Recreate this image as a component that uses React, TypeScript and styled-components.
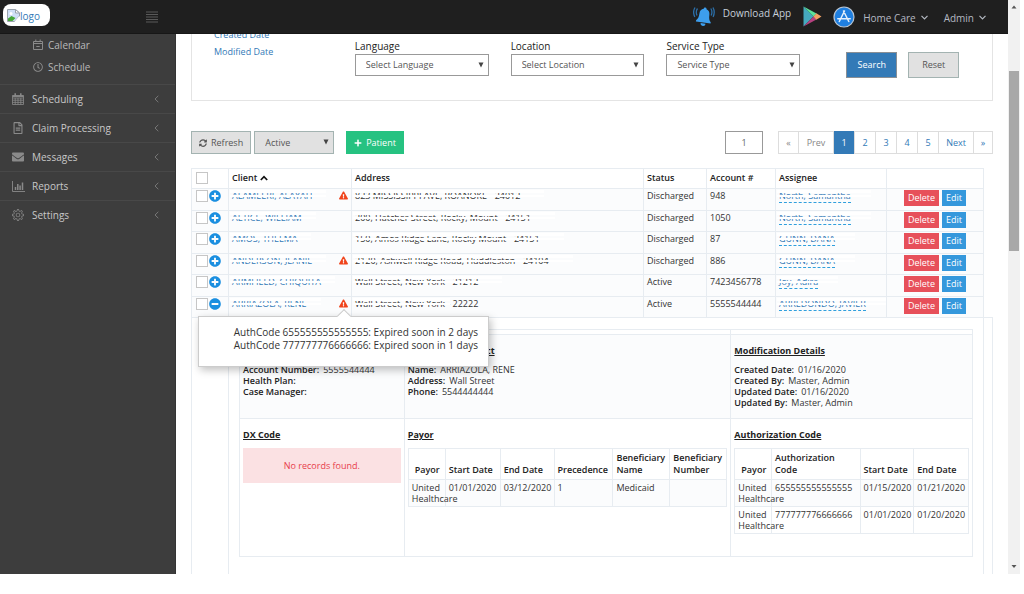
import React from "react";
import styled, { createGlobalStyle, css } from "styled-components";
import {
  FaEnvelope,
  FaExclamationTriangle,
  FaMinusCircle,
  FaPlus,
  FaPlusCircle,
  FaRegClock,
  FaRegFileAlt,
  FaSyncAlt,
} from "react-icons/fa";
import { SlSettings } from "react-icons/sl";

const line = "#e7ecf1";
const link = "#337ab7";

const GlobalStyle = createGlobalStyle`
  *, *::before, *::after { box-sizing: border-box; }
  html, body { margin: 0; background: #fff; }
  body {
    font-family: "Open Sans", "Liberation Sans", sans-serif;
    font-size: 9px;
    line-height: 12px;
    color: #333;
    overflow: hidden;
  }
  a { color: ${link}; text-decoration: none; }
  button, input, select { font: inherit; margin: 0; }
  svg { display: block; flex: none; }
`;

const Page = styled.div`
  display: flex;
  height: calc(100vh - 20px);
  padding-right: 4px;
  overflow: hidden;
`;

const Shell = styled.div`
  flex: 1;
  min-width: 0;
  display: flex;
  flex-direction: column;
`;

/* ---------- top bar ---------- */

const TopBar = styled.header`
  flex: none;
  display: flex;
  align-items: center;
  height: 34px;
  padding: 0 22px 0 3px;
  background: #1f1f1f;
  border-bottom: 1px solid #171717;
  color: #c6cfda;
  font-size: 10px;
`;

const Logo = styled.a`
  display: flex;
  align-items: center;
  width: 47px;
  height: 22px;
  margin-bottom: 4px;
  padding: 2px 0 0 4px;
  border-radius: 8px;
  background: #fff;
  font-size: 10px;
`;

const MenuToggle = styled.button`
  margin-left: 96px;
  padding: 0;
  border: 0;
  background: none;
  color: #5a5a5a;
`;

const TopActions = styled.div`
  display: flex;
  align-items: center;
  margin-left: auto;
`;

const DownloadLabel = styled.span`
  margin: 0 12px 8px 8px;
`;

const StoreLink = styled.a`
  margin-right: 11px;
  & + & { margin-right: 8px; }
`;

const TopMenu = styled.button`
  display: flex;
  align-items: center;
  gap: 5px;
  margin-right: ${(p: { $last?: boolean }) => (p.$last ? 0 : 16)}px;
  padding: 2px 0 0;
  border: 0;
  background: none;
  color: #b4b9c2;
`;

/* ---------- side bar ---------- */

const Body = styled.div`
  flex: 1;
  min-height: 0;
  display: flex;
`;

const SideBar = styled.nav`
  flex: none;
  width: 176px;
  background: #3d3d3d;
  border-right: 1px solid #343434;
`;

const SubLink = styled.a`
  display: flex;
  align-items: center;
  gap: 5px;
  height: 23px;
  padding-left: 33px;
  color: #b9b9b9;
  font-size: 10px;
  svg { color: #8a8a8a; }
`;

const SubMenu = styled.div`
  height: 50px;
  overflow: hidden;
  ${SubLink}:first-child { height: 21px; }
`;

const NavLink = styled.a`
  display: grid;
  grid-template-columns: 20px 1fr 6px;
  align-items: center;
  height: 29px;
  padding: 0 15px 0 12px;
  border-top: 1px solid #484848;
  color: #c8c8c8;
  font-size: 10px;
  svg { color: #8a8a8a; }
`;

/* ---------- main ---------- */

const Main = styled.main`
  flex: 1;
  min-width: 0;
  padding: 0 15px;
  overflow: hidden;
`;

const FilterPanel = styled.form`
  display: grid;
  grid-template-columns: 119fr 134fr 134fr 134fr 159fr;
  column-gap: 22px;
  height: 67px;
  padding: 0 11px 0 22px;
  border: 1px solid #e4e4e4;
  border-top: 0;
`;

const SortLinks = styled.div`
  display: flex;
  flex-direction: column;
  margin-top: -8px;
  line-height: 17px;
`;

const Field = styled.div`
  padding-top: 5px;
  label {
    display: block;
    height: 15px;
    line-height: 14px;
    font-size: 10px;
    color: #222;
  }
`;

const SelectBox = styled.div<{ $grey?: boolean }>`
  position: relative;
  select {
    appearance: none;
    display: block;
    width: 100%;
    height: ${(p) => (p.$grey ? 23 : 22)}px;
    padding: 0 10px;
    border: 1px solid ${(p) => (p.$grey ? "#a3b3b1" : "#999")};
    border-radius: 0;
    background: ${(p) => (p.$grey ? "#e1e1e1" : "#fff")};
    color: #555;
  }
  svg {
    position: absolute;
    right: 5px;
    top: 8px;
    pointer-events: none;
  }
`;

const FilterButtons = styled.div`
  display: flex;
  gap: 11px;
  padding: 18px 0 0 24px;
`;

const Button = styled.button<{ $tone: "blue" | "grey" | "green" }>`
  display: flex;
  align-items: center;
  justify-content: center;
  gap: 4px;
  height: 23px;
  padding: 0 7px;
  border: 1px solid #a3b3b1;
  background: #e1e1e1;
  color: #555;
  ${(p) => p.$tone === "blue" && css`background: #337ab7; border-color: #8a8f94; color: #fff;`}
  ${(p) => p.$tone === "green" && css`background: #26c281; border-color: #26c281; color: #fff;`}
  ${FilterButtons} & { width: 51px; height: 26px; }
`;

const Toolbar = styled.div`
  display: flex;
  align-items: center;
  margin: 30px 0 14px;
  ${SelectBox} { width: 80px; margin: 0 12px 0 3px; }
`;

const PageInput = styled.input`
  width: 38px;
  height: 23px;
  margin: 0 15px 0 auto;
  border: 1px solid #999;
  text-align: center;
  color: #666;
`;

const Pager = styled.nav`
  display: flex;
  border: 1px solid #ddd;
`;

const PagerLink = styled.a<{ $active?: boolean; $muted?: boolean; $wide?: boolean }>`
  width: ${(p) => (p.$wide ? 35 : 21)}px;
  line-height: 21px;
  text-align: center;
  color: ${(p) => (p.$muted ? "#888" : link)};
  &:first-child, &:last-child { width: 19px; }
  & + & { border-left: 1px solid #ddd; }
  ${(p) => p.$active && css`
    && { margin: -1px 0; padding: 1px 0; border-left-color: ${link}; }
    background: ${link};
    color: #fff;
  `}
`;

/* ---------- client table ---------- */

const ClientTable = styled.table`
  width: calc(100% - 9px);
  table-layout: fixed;
  border-collapse: collapse;
  th, td { border: 1px solid ${line}; }
  > thead th {
    height: 20px;
    padding: 0 3px 1px;
    text-align: left;
    font-weight: 600;
    color: #222;
  }
`;

const SortHead = styled.span`
  display: flex;
  align-items: center;
  gap: 3px;
`;

const ClientRow = styled.tr`
  height: 22px;
  background: #fbfcfd;
  &:nth-child(even) { height: 21px; }
  > td { padding: 1px 3px 0; vertical-align: top; }
`;

const SelectCell = styled.div`
  display: flex;
  align-items: center;
  gap: 1px;
  margin-left: 1px;
`;

const Tick = styled.input.attrs({ type: "checkbox" })`
  appearance: none;
  width: 12px;
  height: 12px;
  border: 1px solid #c6c6c6;
  background: #fff;
`;

const IconButton = styled.button`
  padding: 0;
  border: 0;
  background: none;
  color: #1b8fe0;
`;

const ClientCell = styled.div`
  display: flex;
  justify-content: space-between;
`;

const Warning = styled.span`
  position: relative;
  padding-top: 1px;
  color: #f0441c;
`;

/* names and addresses are masked by white strips */
const Masked = styled.span<{ $pad?: number }>`
  position: relative;
  display: inline-block;
  height: 12px;
  white-space: nowrap;
  &::after {
    content: "";
    position: absolute;
    inset: 0 ${(p) => -(p.$pad ?? 0)}px 1px -2px;
    background: linear-gradient(
      #fff 0 3px, transparent 3px 5px, #fff 5px 7px, transparent 7px
    );
  }
`;

const AssigneeLink = styled.a`
  display: inline-block;
  border-bottom: 1px dashed #2f9fdd;
`;

const RowActions = styled.div`
  display: flex;
  justify-content: center;
  gap: 3px;
`;

const SmallButton = styled.button<{ $danger?: boolean }>`
  height: 16px;
  padding: 0 4px;
  border: 0;
  line-height: 16px;
  background: ${(p) => (p.$danger ? "#e7505a" : "#3598dc")};
  color: #fff;
`;

/* ---------- alert bubble ---------- */

const Popover = styled.div`
  position: absolute;
  z-index: 5;
  top: 18px;
  left: -141px;
  width: 291px;
  height: 51px;
  padding: 9px 10px;
  border: 1px solid #ccc;
  background: #fff;
  box-shadow: 2px 3px 8px rgba(0, 0, 0, 0.25);
  color: #333;
  font-size: 10px;
  line-height: 13px;
  text-align: right;
  white-space: nowrap;
  &::before {
    content: "";
    position: absolute;
    left: 140px;
    top: -6px;
    width: 10px;
    height: 10px;
    border: 1px solid #ccc;
    border-right: 0;
    border-bottom: 0;
    background: #fff;
    transform: rotate(45deg);
  }
`;

/* ---------- expanded client ---------- */

const ExpandedCell = styled.td`
  padding: 0;
`;

const Expanded = styled.div`
  min-height: 300px;
  margin-right: -10px;
  padding: 11px 19px 0 10px;
  border-right: 1px solid ${line};
  border-top: 1px solid ${line};
  margin-top: -1px;
`;

const DetailGrid = styled.div`
  display: grid;
  grid-template-columns: 165fr 327fr 242fr;
  grid-template-rows: 5px 84px 138px;
  border: solid ${line};
  border-width: 1px 1px 0 0;
`;

const Detail = styled.section<{ $tint?: boolean }>`
  min-width: 0;
  padding: 10px 3px 0;
  border: solid ${line};
  border-width: 0 0 1px 1px;
  background: ${(p) => (p.$tint ? "#fbfcfd" : "#fff")};
  h3 {
    margin: 0 0 7px;
    font-size: 9px;
    font-weight: 700;
    text-decoration: underline;
    color: #222;
  }
`;

const Spacer = styled.div`
  border: solid ${line};
  border-width: 0 0 1px 1px;
`;

const Facts = styled.dl`
  margin: 0;
  line-height: 11px;
  div { display: flex; gap: 4px; }
  dt { font-weight: 600; color: #222; }
  dd { margin: 0; }
`;

const EmptyNote = styled.p`
  margin: 0;
  line-height: 35px;
  background: #fbe1e3;
  color: #e73d4a;
  text-align: center;
`;

const RecordTable = styled.table`
  width: 100%;
  table-layout: fixed;
  border-collapse: collapse;
  th {
    height: 31px;
    padding: 0 3px 3px;
    vertical-align: bottom;
    text-align: left;
    font-weight: 600;
    color: #222;
  }
  th:first-child { padding-left: 6px; }
  td {
    height: 27px;
    padding: 2px 3px 0;
    vertical-align: top;
    line-height: 11px;
  }
  tbody tr:nth-child(odd) { background: #fbfcfd; }
`;

/* ---------- page scroll bar ---------- */

const ScrollTrack = styled.div`
  flex: none;
  display: flex;
  flex-direction: column;
  align-items: center;
  width: 12px;
  padding: 5px 0;
  background: #f1f1f1;
`;

const ScrollThumb = styled.div`
  width: 10px;
  height: 32%;
  margin: 62px 0 auto;
  background: #a8a8a8;
`;

/* ---------- drawings ---------- */

const Caret = () => (
  <svg width="6" height="6" viewBox="0 0 6 6"><path d="M.5.500h5L3 5.500z" fill="#444" /></svg>
);

const Chevron = () => (
  <svg width="7" height="5" viewBox="0 0 7 5"><path d="M.5.8l3 3 3-3" fill="none" stroke="currentColor" strokeWidth="1.2" /></svg>
);

const ChevronLeft = () => (
  <svg width="5" height="8" viewBox="0 0 5 8"><path d="M4.3.8L1 4l3.300 3.200" fill="none" stroke="#777" /></svg>
);

const ScrollArrow = ({ down }: { down?: boolean }) => (
  <svg width="6" height="4" viewBox="0 0 6 4"><path d={down ? "M.5 0h5L3 3z" : "M.5 3.500h5L3 .5z"} fill="#555" /></svg>
);

const BrokenImage = () => (
  <svg width="13" height="13" viewBox="0 0 13 13">
    <path d="M.5.500h8l4 3.500v3l-5 5.500h-7z" fill="#cfdff5" stroke="#9aa3ad" />
    <path d="M8.500.500v3.500h4z" fill="#fff" stroke="#9aa3ad" />
    <circle cx="4" cy="4.500" r="1.500" fill="#fff" />
    <path d="M1 12V9.500l3.500-2.500 4 2-3 3z" fill="#46a837" />
    <path d="M7.500 12.500l5-5.500v5.500z" fill="#fff" />
  </svg>
);

const Bars = () => (
  <svg width="12" height="12" viewBox="0 0 12 12">
    <path d="M0 1h12M0 3.500h12M0 6h12M0 8.500h12M0 11h12" stroke="currentColor" />
  </svg>
);

const Bell = () => (
  <svg width="22" height="22" viewBox="0 0 22 22">
    <g transform="rotate(8 11 11)" fill="#3d9eed">
      <path d="M11 1.500c.9 0 1.400.6 1.400 1.400 2.500.7 3.600 2.600 3.600 5.100 0 4 .7 5.700 2.400 7.300v1.200H3.600v-1.200C5.300 13.700 6 12 6 8c0-2.500 1.100-4.400 3.600-5.100 0-.8.5-1.400 1.400-1.400z" />
      <path d="M8.500 17.500h5a2.500 2.500 0 0 1-5 0z" />
    </g>
    <path d="M4.500 2.500C3 4.500 3 7 4 9.500M2 1.500C.2 4.500.300 8 1.800 11M17.800 2.500c1.400 2 1.400 4.500.4 7M20 1.500c1.600 3 1.500 6.500.1 9.500" fill="none" stroke="#2c6fa8" strokeWidth="1.300" />
  </svg>
);

const PlayStore = () => (
  <svg width="19" height="21" viewBox="0 0 19 21">
    <path d="M.5.500v20L10.500 10.500z" fill="#45a9be" />
    <path d="M.5.500l13 7-3 3z" fill="#5be29a" />
    <path d="M.5 20.500l13-7-3-3z" fill="#b5417f" />
    <path d="M13.300 7.300L18.500 10.500l-5.200 3.200-2.900-3.200z" fill="#f2a063" />
  </svg>
);

const AppStore = () => (
  <svg width="22" height="22" viewBox="0 0 22 22">
    <circle cx="11" cy="11" r="10" fill="#1f7fe0" stroke="#b9c6d4" strokeWidth="1.200" />
    <path d="M11.500 5L6.300 15.500M10.500 5l5.300 10.500M4.800 12.800h12.400" fill="none" stroke="#e4f0fb" strokeWidth="1.500" strokeLinecap="round" />
  </svg>
);

const CalendarGrid = () => (
  <svg width="12" height="12" viewBox="0 0 12 12" fill="none" stroke="currentColor">
    <path d="M.5 2.500h11v9H.5zM.5 5h11M.5 7.200h11M.5 9.400h11M3.200 5v6.500M6 5v6.500M8.800 5v6.500" strokeWidth=".8" />
    <path d="M.5 3.200h11" strokeWidth="1.500" />
    <path d="M3.200.3v2.500M8.800.3v2.500" strokeWidth="1.500" />
  </svg>
);

const CalendarSmall = () => (
  <svg width="10" height="11" viewBox="0 0 10 11" fill="none" stroke="currentColor">
    <path d="M.5 2.500h9v8h-9zM.5 4.500h9M2.800.5v2.500M7.200.5v2.500M3.300 7.500h3.400" />
  </svg>
);

const Chart = () => (
  <svg width="13" height="11" viewBox="0 0 13 11" fill="none" stroke="currentColor">
    <path d="M.5 0v10.500H13" strokeWidth=".9" />
    <path d="M3.500 9V6M5.800 9V3M8.100 9V4.500M10.500 9V1.500" strokeWidth="1.500" />
  </svg>
);

const SortUp = () => (
  <svg width="8" height="6" viewBox="0 0 8 6"><path d="M.8 5L4 1.700 7.200 5" fill="none" stroke="#111" strokeWidth="1.700" /></svg>
);

/* ---------- data ---------- */

const navItems = [
  { label: "Scheduling", icon: <CalendarGrid /> },
  { label: "Claim Processing", icon: <FaRegFileAlt size={12} /> },
  { label: "Messages", icon: <FaEnvelope size={12} /> },
  { label: "Reports", icon: <Chart /> },
  { label: "Settings", icon: <SlSettings size={12} /> },
];

const filters = [
  { id: "language", label: "Language", value: "Select Language" },
  { id: "location", label: "Location", value: "Select Location" },
  { id: "service", label: "Service Type", value: "Service Type" },
];

const clients = [
  { name: "ALAMEERI, ALAYAH", warn: true, address: "823 MISSISSIPPI AVE, ROANOKE - 24012", clear: "", status: "Discharged", account: "948", assignee: "North, Samantha" },
  { name: "ALTICE, WILLIAM", address: "200, Hatcher Street, Rocky, Mount - 24151", clear: "", status: "Discharged", account: "1050", assignee: "North, Samantha" },
  { name: "AMOS, THELMA", address: "150, Amos Ridge Lane, Rocky Mount - 24151", clear: "", status: "Discharged", account: "87", assignee: "GUNN, DANA" },
  { name: "ANDERSON, JEANIE", warn: true, address: "2120, Ashwell Ridge Road, Huddleston - 24104", clear: "", status: "Discharged", account: "886", assignee: "GUNN, DANA" },
  { name: "ARMFIELD, CHIQUITA", address: "Wall Street, New York - 21212", clear: "", status: "Active", account: "7423456778", assignee: "Joy, Adira" },
  { name: "ARRIAZOLA, RENE", warn: true, open: true, address: "Wall Street, New York -", clear: "22222", status: "Active", account: "5555544444", assignee: "ARREDONDO, JAVIER" },
];

const columnWidths = [37, 123, 292, 63, 69, 111, 97];

const Columns = ({ widths }: { widths: number[] }) => {
  const total = widths.reduce((a, b) => a + b, 0);
  return (
    <colgroup>
      {widths.map((w, i) => <col key={i} style={{ width: `${(w / total) * 100}%` }} />)}
    </colgroup>
  );
};

const FactList = ({ items }: { items: [string, string][] }) => (
  <Facts>
    {items.map(([k, v]) => (
      <div key={k}><dt>{k}:</dt><dd>{v}</dd></div>
    ))}
  </Facts>
);

const Records = ({ widths, heads, rows }: { widths: number[]; heads: string[]; rows: string[][] }) => (
  <RecordTable>
    <Columns widths={widths} />
    <thead><tr>{heads.map((h) => <th key={h}>{h}</th>)}</tr></thead>
    <tbody>
      {rows.map((r, i) => <tr key={i}>{r.map((c, j) => <td key={j}>{c}</td>)}</tr>)}
    </tbody>
  </RecordTable>
);

export default function App() {
  return (
    <>
      <GlobalStyle />
      <Page>
        <Shell>
          <TopBar>
            <Logo href="#"><BrokenImage />logo</Logo>
            <MenuToggle aria-label="Toggle menu"><Bars /></MenuToggle>
            <TopActions>
              <Bell />
              <DownloadLabel>Download App</DownloadLabel>
              <StoreLink href="#" aria-label="Google Play"><PlayStore /></StoreLink>
              <StoreLink href="#" aria-label="App Store"><AppStore /></StoreLink>
              <TopMenu>Home Care <Chevron /></TopMenu>
              <TopMenu $last>Admin <Chevron /></TopMenu>
            </TopActions>
          </TopBar>
          <Body>
            <SideBar>
              <SubMenu>
                <SubLink href="#"><CalendarSmall />Calendar</SubLink>
                <SubLink href="#"><FaRegClock size={10} />Schedule</SubLink>
              </SubMenu>
              {navItems.map((n) => (
                <NavLink href="#" key={n.label}>{n.icon}<span>{n.label}</span><ChevronLeft /></NavLink>
              ))}
            </SideBar>
            <Main>
              <FilterPanel>
                <SortLinks>
                  <a href="#">Created Date</a>
                  <a href="#">Modified Date</a>
                </SortLinks>
                {filters.map((f) => (
                  <Field key={f.id}>
                    <label htmlFor={f.id}>{f.label}</label>
                    <SelectBox>
                      <select id={f.id}><option>{f.value}</option></select>
                      <Caret />
                    </SelectBox>
                  </Field>
                ))}
                <FilterButtons>
                  <Button type="button" $tone="blue">Search</Button>
                  <Button type="button" $tone="grey">Reset</Button>
                </FilterButtons>
              </FilterPanel>

              <Toolbar>
                <Button $tone="grey"><FaSyncAlt size={8} />Refresh</Button>
                <SelectBox $grey>
                  <select aria-label="Status filter"><option>Active</option></select>
                  <Caret />
                </SelectBox>
                <Button $tone="green"><FaPlus size={8} />Patient</Button>
                <PageInput aria-label="Page" defaultValue="1" />
                <Pager aria-label="Pages">
                  <PagerLink href="#" $muted>«</PagerLink>
                  <PagerLink href="#" $muted $wide>Prev</PagerLink>
                  <PagerLink href="#" $active>1</PagerLink>
                  {["2", "3", "4", "5"].map((p) => <PagerLink href="#" key={p}>{p}</PagerLink>)}
                  <PagerLink href="#" $wide>Next</PagerLink>
                  <PagerLink href="#">»</PagerLink>
                </Pager>
              </Toolbar>

              <ClientTable>
                <Columns widths={columnWidths} />
                <thead>
                  <tr>
                    <th><SelectCell><Tick aria-label="Select all" /></SelectCell></th>
                    <th><SortHead>Client <SortUp /></SortHead></th>
                    <th>Address</th>
                    <th>Status</th>
                    <th>Account #</th>
                    <th>Assignee</th>
                    <th aria-label="Actions" />
                  </tr>
                </thead>
                <tbody>
                  {clients.map((c) => (
                    <ClientRow key={c.name}>
                      <td>
                        <SelectCell>
                          <Tick aria-label={`Select ${c.name}`} />
                          <IconButton aria-label="Details">
                            {c.open ? <FaMinusCircle size={12} /> : <FaPlusCircle size={12} />}
                          </IconButton>
                        </SelectCell>
                      </td>
                      <td>
                        <ClientCell>
                          <a href="#"><Masked $pad={14}>{c.name}</Masked></a>
                          {c.warn && (
                            <Warning>
                              <FaExclamationTriangle size={9} />
                              {c.open && (
                                <Popover role="tooltip">
                                  AuthCode 655555555555555: Expired soon in 2 days<br />
                                  AuthCode 777777776666666: Expired soon in 1 days
                                </Popover>
                              )}
                            </Warning>
                          )}
                        </ClientCell>
                      </td>
                      <td><Masked $pad={c.clear ? 0 : 24}>{c.address}</Masked> {c.clear}</td>
                      <td>{c.status}</td>
                      <td>{c.account}</td>
                      <td><AssigneeLink href="#"><Masked $pad={20}>{c.assignee}</Masked></AssigneeLink></td>
                      <td>
                        <RowActions>
                          <SmallButton $danger>Delete</SmallButton>
                          <SmallButton>Edit</SmallButton>
                        </RowActions>
                      </td>
                    </ClientRow>
                  ))}
                  <tr>
                    <ExpandedCell />
                    <ExpandedCell colSpan={6}>
                      <Expanded>
                        <DetailGrid>
                          <Spacer /><Spacer /><Spacer />
                          <Detail $tint>
                            <h3>Account Details</h3>
                            <FactList items={[["Account Number", "5555544444"], ["Health Plan", ""], ["Case Manager", ""]]} />
                          </Detail>
                          <Detail $tint>
                            <h3>Emergency Contact</h3>
                            <FactList items={[["Name", "ARRIAZOLA, RENE"], ["Address", "Wall Street"], ["Phone", "5544444444"]]} />
                          </Detail>
                          <Detail $tint>
                            <h3>Modification Details</h3>
                            <FactList
                              items={[
                                ["Created Date", "01/16/2020"],
                                ["Created By", "Master, Admin"],
                                ["Updated Date", "01/16/2020"],
                                ["Updated By", "Master, Admin"],
                              ]}
                            />
                          </Detail>
                          <Detail>
                            <h3>DX Code</h3>
                            <EmptyNote>No records found.</EmptyNote>
                          </Detail>
                          <Detail>
                            <h3>Payor</h3>
                            <Records
                              widths={[37, 55, 54, 59, 57, 57]}
                              heads={["Payor", "Start Date", "End Date", "Precedence", "Beneficiary Name", "Beneficiary Number"]}
                              rows={[["United Healthcare", "01/01/2020", "03/12/2020", "1", "Medicaid", ""]]}
                            />
                          </Detail>
                          <Detail>
                            <h3>Authorization Code</h3>
                            <Records
                              widths={[37, 89, 54, 55]}
                              heads={["Payor", "Authorization Code", "Start Date", "End Date"]}
                              rows={[
                                ["United Healthcare", "655555555555555", "01/15/2020", "01/21/2020"],
                                ["United Healthcare", "777777776666666", "01/01/2020", "01/20/2020"],
                              ]}
                            />
                          </Detail>
                        </DetailGrid>
                      </Expanded>
                    </ExpandedCell>
                  </tr>
                </tbody>
              </ClientTable>
            </Main>
          </Body>
        </Shell>
        <ScrollTrack>
          <ScrollArrow />
          <ScrollThumb />
          <ScrollArrow down />
        </ScrollTrack>
      </Page>
    </>
  );
}
